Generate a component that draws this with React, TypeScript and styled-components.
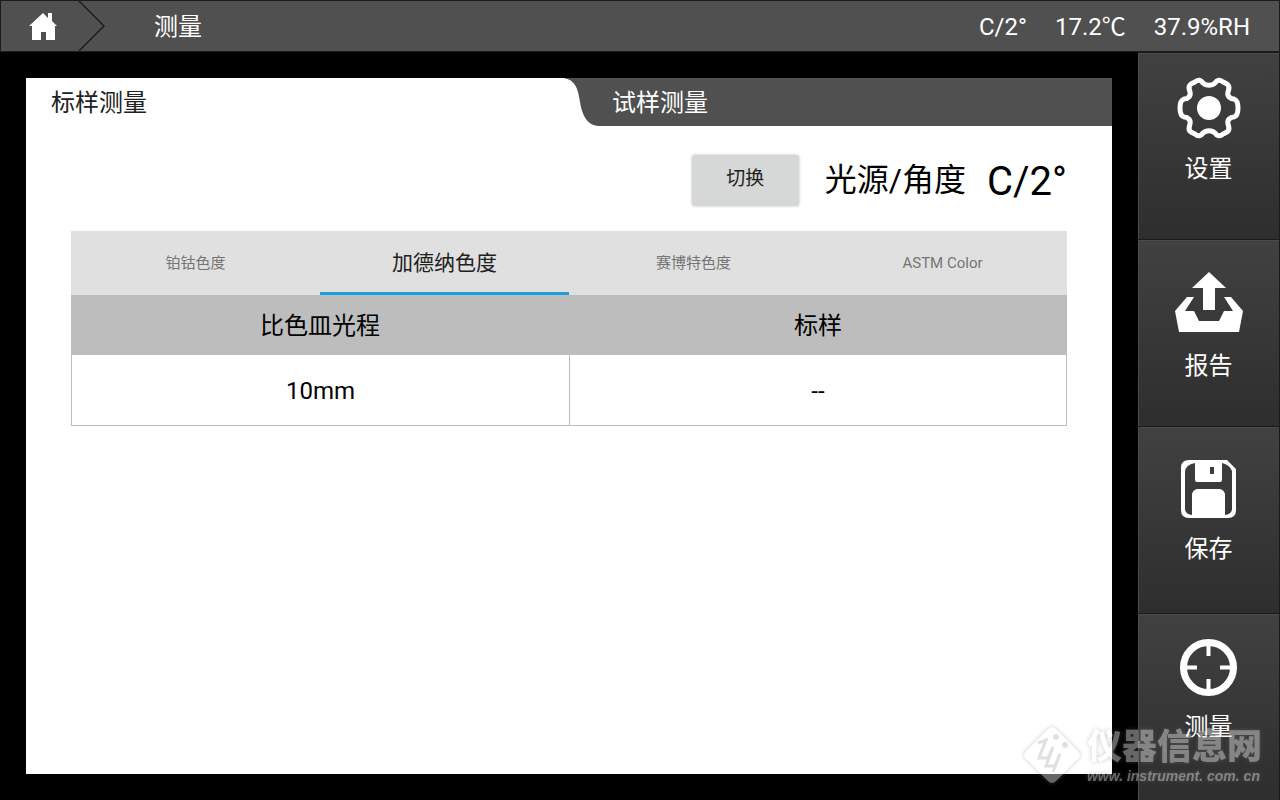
import React from 'react';
import styled, { createGlobalStyle } from 'styled-components';

const GlobalStyle = createGlobalStyle`
  *, *::before, *::after { box-sizing: border-box; }
  body {
    margin: 0;
    background: #000;
    font-family: Roboto, "Noto Sans CJK SC", sans-serif;
    font-size: 24px;
    line-height: 32px;
  }
  button { font-family: inherit; line-height: inherit; border: 0; padding: 0; cursor: pointer; }
  h1 { margin: 0; }
`;

const Screen = styled.div`
  position: relative;
  display: flex;
  flex-direction: column;
  min-height: 100vh;
  overflow: hidden;
  background: #000;
`;

const TopBar = styled.header`
  display: flex;
  align-items: stretch;
  height: 52px;
  background: #505050;
  border: 1px solid #1c1c1c;
  color: #fff;
`;

const HomeLink = styled.a`
  display: block;
  width: 104px;
  height: 50px;
`;

const Title = styled.h1`
  flex: 1;
  padding: 10px 0 0 49px;
  font-size: 24px;
  font-weight: 400;
`;

const Readings = styled.div`
  display: flex;
  gap: 28px;
  padding: 10px 29px 0 0;
`;

const Body = styled.div`
  flex: 1;
  display: flex;
`;

const Main = styled.main`
  flex: 1;
  display: flex;
  padding: 26px;
`;

const Panel = styled.section`
  flex: 1;
  background: #fff;
`;

const SampleTabs = styled.div`
  display: flex;
  height: 48px;
`;

const SampleTab = styled.button<{ $active?: boolean }>`
  flex: ${p => (p.$active ? '0 0 50%' : '1')};
  padding: 2px 0 0 ${p => (p.$active ? 25 : 14)}px;
  text-align: left;
  font-size: 24px;
  color: ${p => (p.$active ? '#212121' : '#fff')};
  background: ${p => (p.$active ? '#fff' : '#505050')};
`;

const TabCurve = styled.svg`
  flex: none;
  width: 37px;
  height: 48px;
  margin-left: -8px;
  background: #505050;
`;

const Content = styled.div`
  padding: 24px 45px;
`;

const LightRow = styled.div`
  display: flex;
  justify-content: flex-end;
  align-items: center;
  height: 60px;
  margin-bottom: 21px;
  color: #000;
`;

const SwitchButton = styled.button`
  width: 107px;
  height: 51px;
  margin-right: 26px;
  padding-bottom: 2px;
  border-radius: 3px;
  background: #d6d7d7;
  box-shadow: 0 0 3px #bbb;
  color: #212121;
  font-size: 19px;
`;

const LightLabel = styled.span`
  margin-right: 21px;
  font-size: 32px;
`;

const LightValue = styled.span`
  padding-top: 4px;
  font-size: 40px;
`;

const ScaleTabs = styled.div`
  display: grid;
  grid-template-columns: repeat(4, 1fr);
  height: 64px;
  background: #e0e0e0;
`;

const ScaleTab = styled.button<{ $active?: boolean }>`
  background: none;
  padding-top: 3px;
  border-bottom: 3px solid ${p => (p.$active ? '#1e9dd8' : 'transparent')};
  color: ${p => (p.$active ? '#212121' : '#757575')};
  font-size: ${p => (p.$active ? 21 : 15)}px;
`;

const Results = styled.table`
  width: 100%;
  table-layout: fixed;
  border-collapse: separate;
  border-spacing: 0;
  color: #000;

  th {
    height: 60px;
    padding: 2px 0 0;
    background: #bdbdbd;
    font-weight: 400;
  }
  td {
    height: 71px;
    padding: 2px 0 0;
    border: solid #bdbdbd;
    border-width: 0 0 1px 1px;
    text-align: center;
  }
  td:last-child {
    border-right-width: 1px;
  }
`;

const SideBar = styled.nav`
  display: grid;
  grid-template-rows: repeat(4, 1fr);
  width: 142px;
`;

const SideButton = styled.button`
  display: flex;
  flex-direction: column;
  align-items: center;
  padding-top: 22px;
  border: solid #1a1a1a;
  border-width: 1px 1px 0 0;
  background: linear-gradient(#414141, #2e2e2e);
  box-shadow: inset 1px 1px 0 #4c4c4c;
  color: #fff;
  font-size: 24px;
`;

const SideIcon = styled.svg<{ $h: number }>`
  width: 72px;
  height: ${p => p.$h}px;
  flex: none;
  overflow: visible;
`;

const Watermark = styled.div`
  position: absolute;
  right: 18px;
  bottom: 15px;
  display: flex;
  align-items: center;
  gap: 5px;
  color: #fff;
  opacity: 0.4;
  pointer-events: none;
  filter: drop-shadow(0 0 2px #777);
`;

const WatermarkName = styled.div`
  padding-top: 1px;
  font-size: 35px;
  font-weight: 900;
  line-height: 40px;
`;

const WatermarkUrl = styled.div`
  font: italic 700 14px/16px "Liberation Sans", sans-serif;
`;

const gearOutline =
  'M-14 -26 C-11 -29 -8 -28 -6 -25 C-3 -22 3 -22 6 -25 C8 -28 11 -29 14 -26 L18 -24 C21 -22 20 -19 19 -16 C18 -12 21 -9 25 -9 C28 -8 29 -5 29 0 C29 5 28 8 25 9 C21 9 18 12 19 16 C20 19 21 22 18 24 L14 26 C11 29 8 28 6 25 C3 22 -3 22 -6 25 C-8 28 -11 29 -14 26 L-18 24 C-21 22 -20 19 -19 16 C-18 12 -21 9 -25 9 C-28 8 -29 5 -29 0 C-29 -5 -28 -8 -25 -9 C-21 -9 -18 -12 -19 -16 C-20 -19 -21 -22 -18 -24 Z';

export default function App() {
  return (
    <>
      <GlobalStyle />
      <Screen>
        <TopBar>
          <HomeLink href="#" aria-label="Home">
            <svg width="104" height="50" viewBox="0 0 104 50">
              <path d="M78 0 L103 25 L78 50" fill="none" stroke="#1c1c1c" strokeWidth="1.5" />
              <path d="M28 25 L42 12 L47 17 V12 H51 V20 L56 25 H54 V39 H45 V31 H40 V39 H31 V25 Z" fill="#fff" />
            </svg>
          </HomeLink>
          <Title>测量</Title>
          <Readings>
            <span>C/2°</span>
            <span>17.2℃</span>
            <span>37.9%RH</span>
          </Readings>
        </TopBar>
        <Body>
          <Main>
            <Panel>
              <SampleTabs>
                <SampleTab $active>标样测量</SampleTab>
                <TabCurve viewBox="0 0 37 48" aria-hidden="true">
                  <path d="M0 0 C13 0 17 9 19 24 C21 37 26 47 37 48 H0 Z" fill="#fff" />
                </TabCurve>
                <SampleTab>试样测量</SampleTab>
              </SampleTabs>
              <Content>
                <LightRow>
                  <SwitchButton>切换</SwitchButton>
                  <LightLabel>光源/角度</LightLabel>
                  <LightValue>C/2°</LightValue>
                </LightRow>
                <ScaleTabs>
                  <ScaleTab>铂钴色度</ScaleTab>
                  <ScaleTab $active>加德纳色度</ScaleTab>
                  <ScaleTab>赛博特色度</ScaleTab>
                  <ScaleTab>ASTM Color</ScaleTab>
                </ScaleTabs>
                <Results>
                  <thead>
                    <tr><th>比色皿光程</th><th>标样</th></tr>
                  </thead>
                  <tbody>
                    <tr><td>10mm</td><td>--</td></tr>
                  </tbody>
                </Results>
              </Content>
            </Panel>
          </Main>
          <SideBar>
            <SideButton>
              <SideIcon $h={78} viewBox="-36 -33 72 78">
                <path d={gearOutline} fill="none" stroke="#fff" strokeWidth="5" />
                <circle r="12" fill="#fff" />
              </SideIcon>
              设置
            </SideButton>
            <SideButton>
              <SideIcon $h={88} viewBox="0 0 72 88">
                <path d="M36 10 L53 26 H42 V48 H30 V26 H19 Z" fill="#fff" />
                <path d="M14 35 H21 L12 49 H21 L26 59 H46 L51 49 H60 L51 35 H58 L70 49 L66 70 H6 L2 49 Z" fill="#fff" />
              </SideIcon>
              报告
            </SideButton>
            <SideButton>
              <SideIcon $h={84} viewBox="0 0 72 84">
                <path fillRule="evenodd" d="M16 11 H54 L63 20 V61 Q63 69 55 69 H16 Q8 69 8 61 V19 Q8 11 16 11 Z M22 14 Q12 16 12 23 V60 Q12 65 19 66 V45 Q20 41 24 40 H47 Q51 41 52 45 V66 Q59 65 59 60 V22 Q57 16 49 14 V31 Q49 33 47 33 H24 Q22 33 22 31 Z M37 18 V25 H41 V18 Z" fill="#fff" />
              </SideIcon>
              保存
            </SideButton>
            <SideButton>
              <SideIcon $h={75} viewBox="0 0 72 75">
                <circle cx="35.5" cy="31.5" r="25" fill="none" stroke="#fff" strokeWidth="7" />
                <path d="M35.5 9 V20 M35.5 43 V54 M13 31.5 H24 M47 31.5 H58" stroke="#fff" strokeWidth="4" />
              </SideIcon>
              测量
            </SideButton>
          </SideBar>
        </Body>
        <Watermark>
          <svg width="60" height="60" viewBox="0 0 60 60">
            <path d="M26 4 Q30 0 34 4 L56 26 Q60 30 56 34 L34 56 Q30 60 26 56 L4 34 Q0 30 4 26 Z" fill="#fff" />
            <path d="M16 18 L24 15 L17 33 H26 L31 22 L24 41 H33 L38 29 L31 47" fill="none" stroke="#b4b4b4" strokeWidth="3" />
            <circle cx="34" cy="12" r="3" fill="#b4b4b4" />
            <circle cx="43" cy="20" r="3" fill="#b4b4b4" />
          </svg>
          <div>
            <WatermarkName>仪器信息网</WatermarkName>
            <WatermarkUrl>www. instrument. com. cn</WatermarkUrl>
          </div>
        </Watermark>
      </Screen>
    </>
  );
}
